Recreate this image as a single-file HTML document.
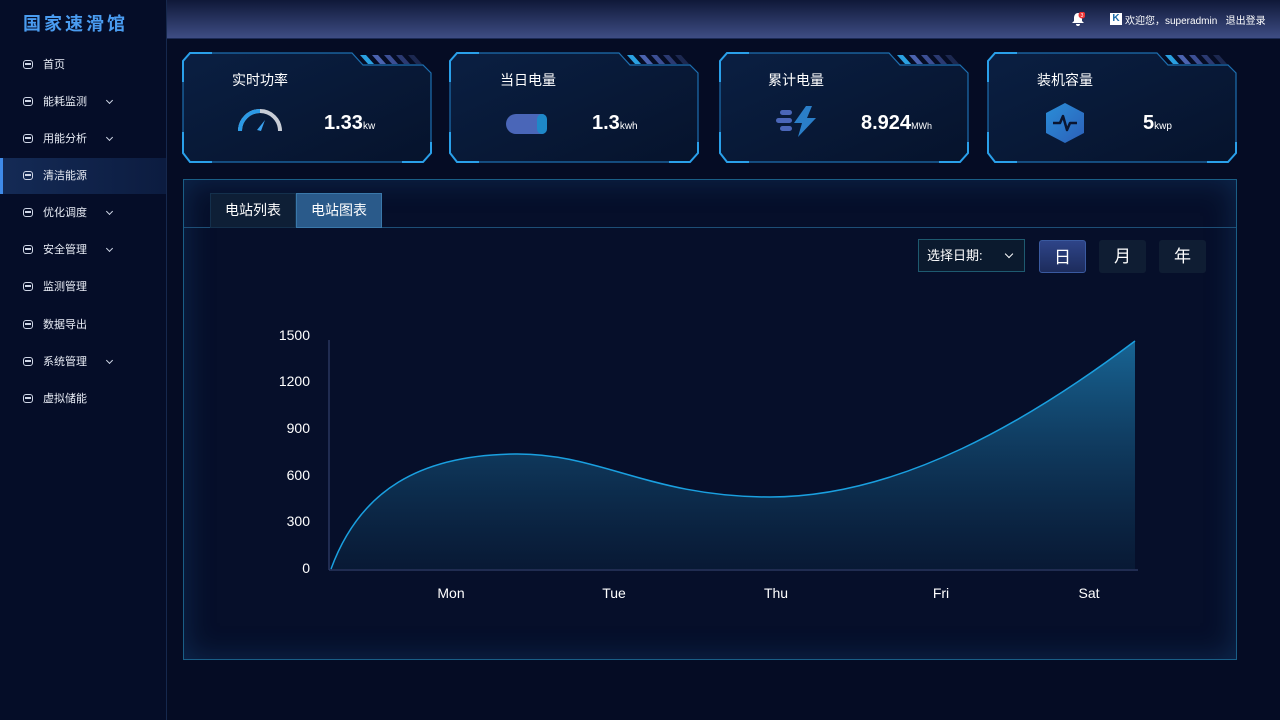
<!DOCTYPE html>
<html><head><meta charset="utf-8"><style>
*{margin:0;padding:0;box-sizing:border-box}
body{width:1280px;height:720px;overflow:hidden;background:#050c24;font-family:"Liberation Sans","Noto Sans CJK SC",sans-serif;color:#fff;position:relative}
.side{position:absolute;left:0;top:0;width:167px;height:720px;background:#050d28;border-right:1px solid #16284d}
.logo{position:absolute;left:23px;top:10px;font-size:18px;letter-spacing:3px;color:#4a9cf0;font-weight:bold}
.mi{position:absolute;left:0;width:166px;height:36px;font-size:11px;line-height:36px;padding-left:43px;color:#e8ecf5}
.mi .ic{position:absolute;left:23px;top:13px;width:10px;height:9px;border:1.5px solid #cfd6e6;border-radius:3px}
.mi .ic:after{content:"";position:absolute;left:1px;right:1px;top:2px;height:1.5px;background:#cfd6e6}
.chev{position:absolute;width:5px;height:5px;border-right:1.3px solid #cfd6e6;border-bottom:1.3px solid #cfd6e6;transform:rotate(45deg)}
.mi .chev{left:107px;top:14px}
.mi.act{background:linear-gradient(90deg,#142a55,#0c1c40);border-left:3px solid #3f8ae8;padding-left:40px}
.mi.act .ic{left:20px}
.top{position:absolute;left:167px;top:0;width:1113px;height:39px;background:linear-gradient(180deg,#0f1838,#3e4d84);border-bottom:1px solid #1b2a55}
.card{position:absolute;top:52px;width:250px;height:111px}
.card svg{position:absolute;left:0;top:0}
.ct{position:absolute;top:18px;font-size:14px}
.cv{position:absolute;top:60px;font-size:20px;font-weight:bold}
.cv small{font-size:10px;font-weight:normal}
.panel{position:absolute;left:183px;top:179px;width:1054px;height:481px;border:1px solid #1a5e86;background:#060f2a;box-shadow:inset 0 0 30px rgba(30,90,150,.35)}
.tab{position:absolute;top:13px;height:35px;width:86px;font-size:14px;line-height:33px;text-align:center}
.btn{position:absolute;top:60px;height:33px;width:47px;border-radius:3px;background:#0f1d33;font-size:17px;text-align:center;line-height:33px}
</style></head><body>
<div class="side">
<div class="logo">国家速滑馆</div>
<div class="mi" style="top:47px"><span class="ic"></span>首页</div>
<div class="mi" style="top:84px"><span class="ic"></span>能耗监测<span class="chev"></span></div>
<div class="mi" style="top:121px"><span class="ic"></span>用能分析<span class="chev"></span></div>
<div class="mi act" style="top:158px"><span class="ic"></span>清洁能源</div>
<div class="mi" style="top:195px"><span class="ic"></span>优化调度<span class="chev"></span></div>
<div class="mi" style="top:232px"><span class="ic"></span>安全管理<span class="chev"></span></div>
<div class="mi" style="top:269px"><span class="ic"></span>监测管理</div>
<div class="mi" style="top:307px"><span class="ic"></span>数据导出</div>
<div class="mi" style="top:344px"><span class="ic"></span>系统管理<span class="chev"></span></div>
<div class="mi" style="top:381px"><span class="ic"></span>虚拟储能</div>
</div>
<div class="top">
<svg style="position:absolute;left:904px;top:12px" width="14" height="15" viewBox="0 0 14 15"><path d="M7 1C4 1 3 4 3 6v3L1 11h12l-2-2V6c0-2-1-5-4-5zM5 12a2 2 0 0 0 4 0z" fill="#fff"/><circle cx="11" cy="3" r="3.5" fill="#e33"/><text x="11" y="5" font-size="5" fill="#fff" text-anchor="middle">3</text></svg>
<div style="position:absolute;left:943px;top:13px;width:12px;height:12px;background:#fff;color:#1a6aa8;font-size:10px;font-weight:bold;line-height:12px;text-align:center">K</div>
<div style="position:absolute;left:958px;top:12px;font-size:10px">欢迎您，superadmin&nbsp;&nbsp;&nbsp;退出登录</div>
</div>

<div class="card" style="left:182px">
<svg width="250" height="111"><defs><linearGradient id="cg" x1="0" y1="0" x2="1" y2="1"><stop offset="0" stop-color="#0a1f42"/><stop offset="1" stop-color="#06132c"/></linearGradient></defs>
<path d="M8 1H170L181 13H241L249 21V101L241 110H8L1 101V9Z" fill="url(#cg)" stroke="#1d6fb0" stroke-width="1.2"/>
<path d="M1 30V9L8 1H30M1 80V101L8 110H30M220 110H241L249 101V90" fill="none" stroke="#2aa0ea" stroke-width="2"/>
<g transform="translate(178,3)"><path d="M0 0h6l8 9h-6z" fill="#2aa0e0"/><path d="M12 0h6l8 9h-6z" fill="#4b63b0"/><path d="M24 0h6l8 9h-6z" fill="#3c4f95"/><path d="M36 0h6l8 9h-6z" fill="#2b3a72"/><path d="M48 0h6l8 9h-6z" fill="#1c2850"/></g></svg>
<div class="ct" style="left:50px">实时功率</div>
<svg style="position:absolute;left:55px;top:54px" width="46" height="26" viewBox="0 0 46 26"><path d="M3 25A20 20 0 0 1 43 25" fill="none" stroke="#c8cdd6" stroke-width="4"/><path d="M3 25A20 20 0 0 1 23 5" fill="none" stroke="#2b9ae6" stroke-width="4"/><path d="M20 24L28 14L24 25Z" fill="#3aa2f0"/></svg>
<div class="cv" style="left:142px">1.33<small>kw</small></div>
</div>
<div class="card" style="left:449px">
<svg width="250" height="111"><path d="M8 1H170L181 13H241L249 21V101L241 110H8L1 101V9Z" fill="url(#cg)" stroke="#1d6fb0" stroke-width="1.2"/>
<path d="M1 30V9L8 1H30M1 80V101L8 110H30M220 110H241L249 101V90" fill="none" stroke="#2aa0ea" stroke-width="2"/>
<g transform="translate(178,3)"><path d="M0 0h6l8 9h-6z" fill="#2aa0e0"/><path d="M12 0h6l8 9h-6z" fill="#4b63b0"/><path d="M24 0h6l8 9h-6z" fill="#3c4f95"/><path d="M36 0h6l8 9h-6z" fill="#2b3a72"/><path d="M48 0h6l8 9h-6z" fill="#1c2850"/></g></svg>
<div class="ct" style="left:51px">当日电量</div>
<div style="position:absolute;left:57px;top:62px;width:40px;height:20px;border-radius:10px 4px 4px 10px;background:#4a66b8"></div>
<div style="position:absolute;left:88px;top:62px;width:10px;height:20px;border-radius:5px;background:#1e88c8"></div>
<div class="cv" style="left:143px">1.3<small>kwh</small></div>
</div>
<div class="card" style="left:719px">
<svg width="250" height="111"><path d="M8 1H170L181 13H241L249 21V101L241 110H8L1 101V9Z" fill="url(#cg)" stroke="#1d6fb0" stroke-width="1.2"/>
<path d="M1 30V9L8 1H30M1 80V101L8 110H30M220 110H241L249 101V90" fill="none" stroke="#2aa0ea" stroke-width="2"/>
<g transform="translate(178,3)"><path d="M0 0h6l8 9h-6z" fill="#2aa0e0"/><path d="M12 0h6l8 9h-6z" fill="#4b63b0"/><path d="M24 0h6l8 9h-6z" fill="#3c4f95"/><path d="M36 0h6l8 9h-6z" fill="#2b3a72"/><path d="M48 0h6l8 9h-6z" fill="#1c2850"/></g></svg>
<div class="ct" style="left:49px">累计电量</div>
<svg style="position:absolute;left:57px;top:54px" width="42" height="32" viewBox="0 0 42 32"><rect x="4" y="4" width="12" height="5" rx="2.5" fill="#4a66b8"/><rect x="0" y="12" width="16" height="5" rx="2.5" fill="#4a66b8"/><rect x="4" y="20" width="12" height="5" rx="2.5" fill="#4a66b8"/><path d="M30 0L18 17H26L22 31L40 12H31L36 0Z" fill="#2a7ec8"/></svg>
<div class="cv" style="left:142px">8.924<small style="font-size:9px">MWh</small></div>
</div>
<div class="card" style="left:987px">
<svg width="250" height="111"><path d="M8 1H170L181 13H241L249 21V101L241 110H8L1 101V9Z" fill="url(#cg)" stroke="#1d6fb0" stroke-width="1.2"/>
<path d="M1 30V9L8 1H30M1 80V101L8 110H30M220 110H241L249 101V90" fill="none" stroke="#2aa0ea" stroke-width="2"/>
<g transform="translate(178,3)"><path d="M0 0h6l8 9h-6z" fill="#2aa0e0"/><path d="M12 0h6l8 9h-6z" fill="#4b63b0"/><path d="M24 0h6l8 9h-6z" fill="#3c4f95"/><path d="M36 0h6l8 9h-6z" fill="#2b3a72"/><path d="M48 0h6l8 9h-6z" fill="#1c2850"/></g></svg>
<div class="ct" style="left:50px">装机容量</div>
<svg style="position:absolute;left:57px;top:50px" width="42" height="42" viewBox="0 0 42 42"><defs><linearGradient id="hg" x1="0" y1="0" x2="1" y2="1"><stop offset="0" stop-color="#2a8ed8"/><stop offset="1" stop-color="#2c5fb8"/></linearGradient></defs><path d="M21 1L40 11V31L21 41L2 31V11Z" fill="url(#hg)"/><path d="M9 21H16L19 14L23 28L26 21H33" fill="none" stroke="#0a1530" stroke-width="2.5" stroke-linejoin="round"/></svg>
<div class="cv" style="left:156px">5<small>kwp</small></div>
</div>

<div class="panel">
<div style="position:absolute;left:0;right:0;top:47px;height:1px;background:#1d4e76"></div>
<div class="tab" style="left:26px;background:#0e1f36;border:1px solid #14304c">电站列表</div>
<div class="tab" style="left:112px;background:#2a5a8a;border:1px solid #3a78aa">电站图表</div>
<div style="position:absolute;left:734px;top:59px;width:107px;height:33px;border:1px solid #1e5a70;background:#0b1a2e;font-size:13px;line-height:31px;padding-left:8px">选择日期:<span class="chev" style="left:87px;top:11px;width:6px;height:6px;border-color:#fff"></span></div>
<div class="btn" style="left:855px;background:linear-gradient(180deg,#2e4488,#1d2c5c);border:1px solid #3a5aa0">日</div>
<div class="btn" style="left:915px">月</div>
<div class="btn" style="left:975px">年</div>
</div>

<svg style="position:absolute;left:0;top:0" width="1280" height="720">
<defs><linearGradient id="ag" x1="0" y1="0" x2="0" y2="1"><stop offset="0" stop-color="#1a6ea0" stop-opacity=".9"/><stop offset="1" stop-color="#0b2440" stop-opacity=".5"/></linearGradient></defs>
<path d="M331 569C360 490 420 455 515 454C600 453 650 497 770 497C900 497 1030 420 1135 341L1135 569Z" fill="url(#ag)"/>
<path d="M331 569C360 490 420 455 515 454C600 453 650 497 770 497C900 497 1030 420 1135 341" fill="none" stroke="#1aa0e0" stroke-width="1.5"/>
<line x1="329" y1="340" x2="329" y2="570" stroke="#3a4a78"/>
<line x1="329" y1="570" x2="1138" y2="570" stroke="#3a4a78"/>
<g font-family="Liberation Sans, sans-serif" font-size="14" fill="#fff" text-anchor="end">
<text x="310" y="340">1500</text><text x="310" y="386">1200</text><text x="310" y="433">900</text><text x="310" y="480">600</text><text x="310" y="526">300</text><text x="310" y="573">0</text></g>
<g font-family="Liberation Sans, sans-serif" font-size="14" fill="#fff" text-anchor="middle">
<text x="451" y="598">Mon</text><text x="614" y="598">Tue</text><text x="776" y="598">Thu</text><text x="941" y="598">Fri</text><text x="1089" y="598">Sat</text></g>
</svg>
</body></html>
